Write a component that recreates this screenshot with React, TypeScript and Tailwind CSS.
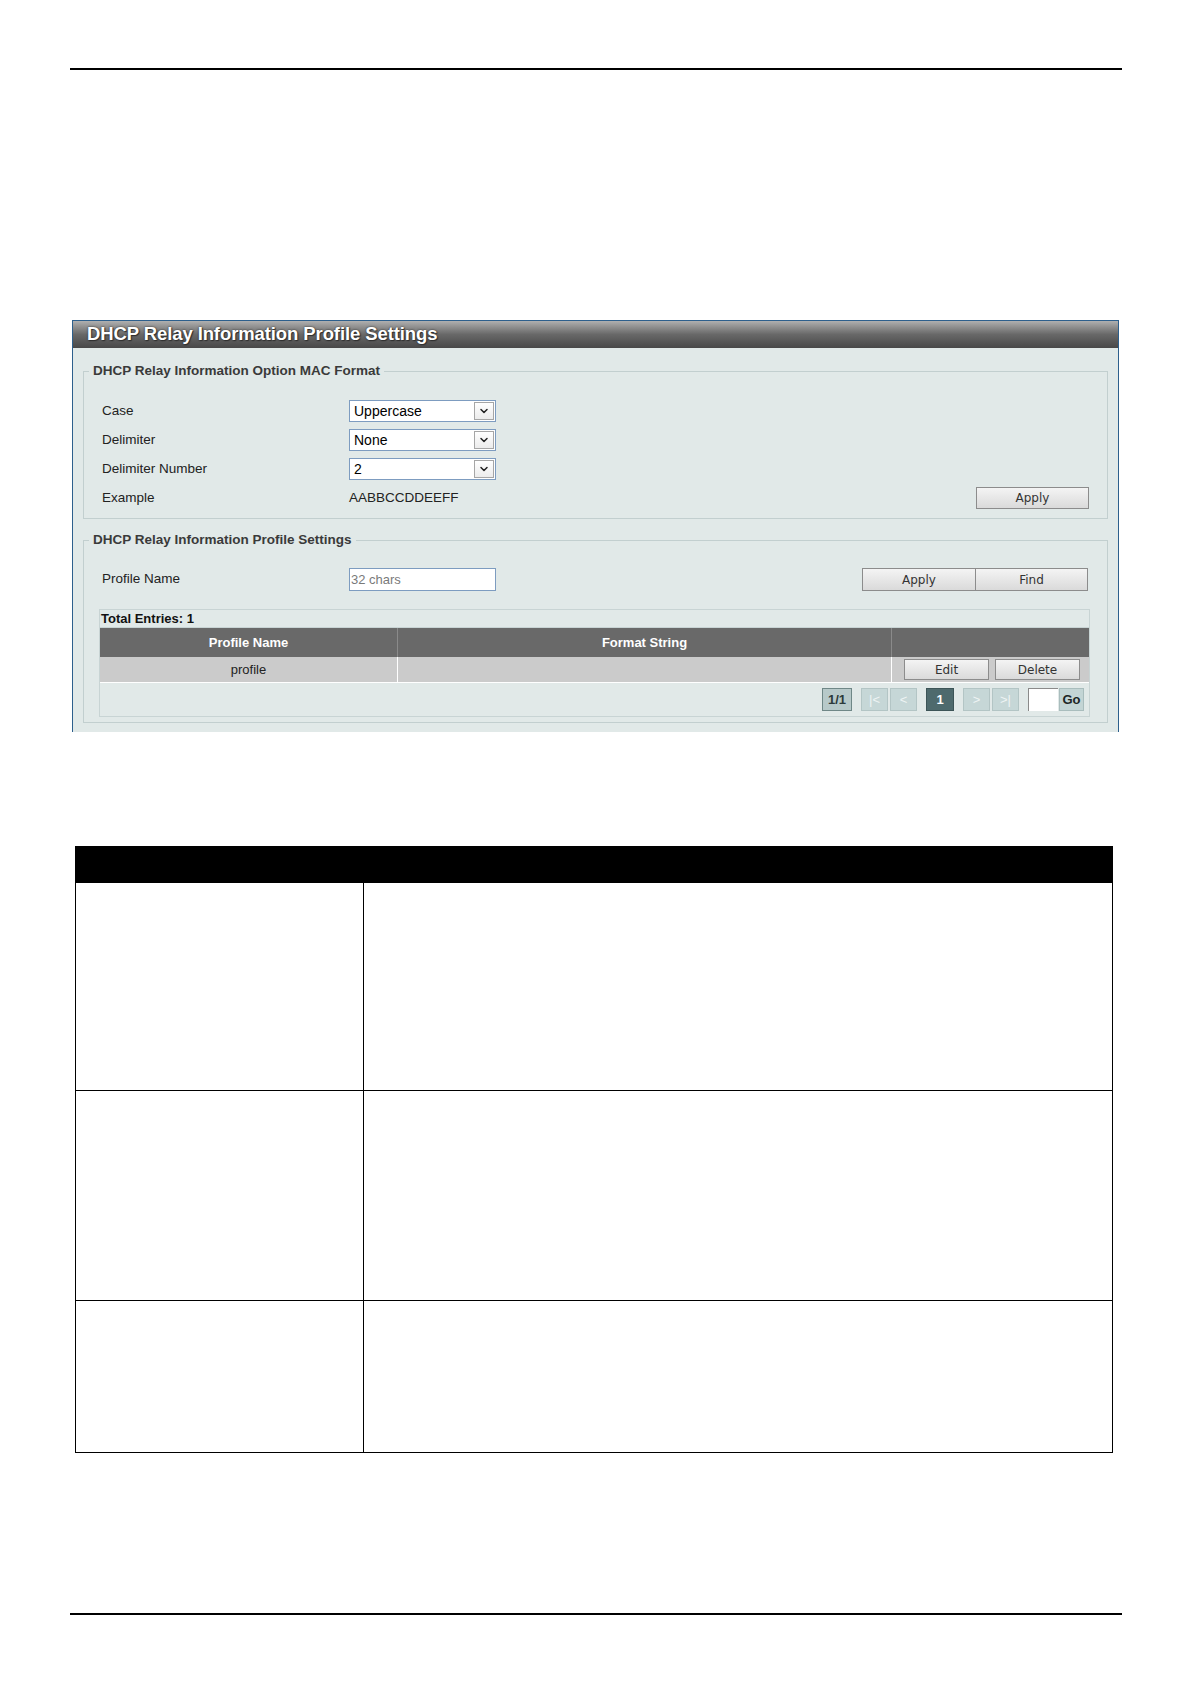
import { ChevronDown } from "lucide-react";

const selects = [
  { label: "Case", value: "Uppercase" },
  { label: "Delimiter", value: "None" },
  { label: "Delimiter Number", value: "2" },
];

const btn =
  "h-full border border-[#8c8c8c] bg-gradient-to-b from-[#f4f4f4] to-[#dadada] text-[12px] text-[#333] font-['DejaVu_Sans',sans-serif] leading-none";

function Select({ value }: { value: string }) {
  return (
    <div className="w-[147px] h-[22px] bg-white border border-[#7d9cc0] flex items-center justify-between pl-[4px] pr-[1px]">
      <span className="text-[14px] text-black leading-none">{value}</span>
      <span className="w-[20px] h-[18px] border border-[#a6a6a6] bg-gradient-to-b from-white to-[#ececec] flex items-center justify-center">
        <ChevronDown className="w-[12px] h-[12px] text-[#222]" strokeWidth={3} />
      </span>
    </div>
  );
}

function PageBox({
  children,
  tone,
  className = "",
}: {
  children: React.ReactNode;
  tone: "info" | "off" | "on" | "go";
  className?: string;
}) {
  const tones = {
    info: "bg-[#b7c9c9] border-[#6f8787] text-[#2c3a3a] font-bold",
    off: "bg-[#c6d7d7] border-[#b3c5c5] text-[#eef4f4]",
    on: "bg-[#4e6a6d] border-[#3c5457] text-white font-bold",
    go: "bg-[#c3d5d5] border-[#a9bdbd] text-[#1d2626] font-bold",
  };
  return (
    <div
      className={`h-[23px] border flex items-center justify-center text-[13px] leading-none ${tones[tone]} ${className}`}
    >
      {children}
    </div>
  );
}

export default function App() {
  return (
    <div className="w-[1192px] h-[1684px] bg-white font-['Liberation_Sans',Arial,sans-serif] overflow-hidden">
      {/* header rule */}
      <div className="pt-[68px] pl-[70px]">
        <div className="w-[1052px] h-[2px] bg-black" />
      </div>

      {/* settings panel */}
      <div className="mt-[250px] ml-[72px] w-[1047px] bg-[#e1e9e8] border-x border-t border-[#2d5f8c] pb-[9px]">
        <div className="h-[27px] bg-gradient-to-b from-[#b0b0b0] via-[#686868] to-[#484848] flex items-center pl-[14px]">
          <span className="text-[18.5px] font-bold text-white leading-none tracking-[-0.1px] [text-shadow:0_0_2px_#222,1px_1px_1px_#333]">
            DHCP Relay Information Profile Settings
          </span>
        </div>

        {/* MAC format */}
        <fieldset className="mt-[16px] mx-[10px] border border-[#c2cfcf] pb-[9px]">
          <legend className="ml-[5px] px-[4px] text-[13.5px] font-bold text-[#3a3a3a] leading-[14px]">
            DHCP Relay Information Option MAC Format
          </legend>
          <div className="pt-[22px] px-[18px] flex flex-col gap-[7px]">
            {selects.map((s) => (
              <div key={s.label} className="flex items-center h-[22px]">
                <span className="w-[247px] text-[13.5px] text-[#222]">{s.label}</span>
                <Select value={s.value} />
              </div>
            ))}
            <div className="flex items-center h-[22px]">
              <span className="w-[247px] text-[13.5px] text-[#222]">Example</span>
              <span className="text-[13.5px] text-[#222]">AABBCCDDEEFF</span>
              <div className="ml-auto -mt-[5px] h-[22px] w-[113px]">
                <button className={`${btn} w-full`}>Apply</button>
              </div>
            </div>
          </div>
        </fieldset>

        {/* profile settings */}
        <fieldset className="mt-[14px] mx-[10px] border border-[#c2cfcf] pb-[5px]">
          <legend className="ml-[5px] px-[4px] text-[13.5px] font-bold text-[#3a3a3a] leading-[14px]">
            DHCP Relay Information Profile Settings
          </legend>
          <div className="pl-[15px] pr-[17px]">
            <div className="pt-[21px] flex items-center h-[44px] pl-[3px]">
              <span className="w-[247px] text-[13.5px] text-[#222]">Profile Name</span>
              <div className="w-[147px] h-[23px] bg-white border border-[#7d9cc0] flex items-center pl-[1px]">
                <span className="text-[13px] text-[#7a7a7a]">32 chars</span>
              </div>
              <div className="ml-auto flex h-[23px] mr-[2px]">
                <button className={`${btn} w-[114px]`}>Apply</button>
                <button className={`${btn} w-[113px] -ml-px`}>Find</button>
              </div>
            </div>

            <div className="mt-[18px] border border-[#c8d4d4]">
              <div className="h-[18px] flex items-center border-b border-[#c8d4d4] pl-[1px]">
                <span className="text-[13px] font-bold text-[#111]">Total Entries: 1</span>
              </div>
              <div className="grid grid-cols-[298px_494px_1fr] h-[29px] bg-[#696969] text-white text-[13px] font-bold">
                <div className="flex items-center justify-center border-r border-[#8a8a8a]">Profile Name</div>
                <div className="flex items-center justify-center border-r border-[#8a8a8a]">Format String</div>
                <div />
              </div>
              <div className="grid grid-cols-[298px_494px_1fr] h-[26px] bg-[#cbcbcb] text-[13px] text-[#222] border-b border-white">
                <div className="flex items-center justify-center border-r border-white">profile</div>
                <div className="border-r border-white" />
                <div className="flex items-center gap-[6px] pl-[12px] py-[2px]">
                  <button className={`${btn} w-[85px]`}>Edit</button>
                  <button className={`${btn} w-[85px]`}>Delete</button>
                </div>
              </div>
              <div className="h-[33px] flex items-center justify-end pr-[5px] gap-[9px]">
                <PageBox tone="info" className="w-[30px]">1/1</PageBox>
                <div className="flex gap-[2px]">
                  <PageBox tone="off" className="w-[27px]">|&lt;</PageBox>
                  <PageBox tone="off" className="w-[27px]">&lt;</PageBox>
                </div>
                <PageBox tone="on" className="w-[28px]">1</PageBox>
                <div className="flex gap-[2px]">
                  <PageBox tone="off" className="w-[27px]">&gt;</PageBox>
                  <PageBox tone="off" className="w-[27px]">&gt;|</PageBox>
                </div>
                <div className="flex items-end">
                  <div className="w-[30px] h-[23px] bg-white border-t border-l border-[#8a8a8a]" />
                  <PageBox tone="go" className="w-[25px] h-[21px] ml-[1px]">Go</PageBox>
                </div>
              </div>
            </div>
          </div>
        </fieldset>
      </div>

      {/* parameter table */}
      <div className="mt-[114px] ml-[75px] w-[1038px] border border-black">
        <div className="h-[36px] bg-black" />
        <div className="grid grid-cols-[288px_1fr] h-[207px]">
          <div className="border-r border-black" />
          <div />
        </div>
        <div className="grid grid-cols-[288px_1fr] h-[210px] border-t border-black">
          <div className="border-r border-black" />
          <div />
        </div>
        <div className="grid grid-cols-[288px_1fr] h-[152px] border-t border-black">
          <div className="border-r border-black" />
          <div />
        </div>
      </div>

      {/* footer rule */}
      <div className="mt-[160px] pl-[70px]">
        <div className="w-[1052px] h-[2px] bg-black" />
      </div>
    </div>
  );
}
